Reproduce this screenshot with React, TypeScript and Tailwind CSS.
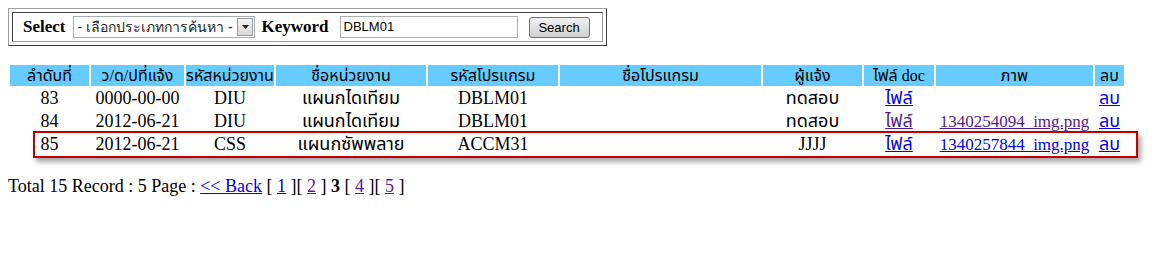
const font = 'font-["Liberation_Serif","Tahoma","Noto_Sans_Thai","Loma","Garuda",serif]';

type Row = {
  no: string;
  date: string;
  dept: string;
  deptName: string;
  prog: string;
  progName: string;
  reporter: string;
  fileVisited: boolean;
  image?: { name: string; visited: boolean };
};

const rows: Row[] = [
  { no: '83', date: '0000-00-00', dept: 'DIU', deptName: 'แผนกไดเทียม', prog: 'DBLM01', progName: '', reporter: 'ทดสอบ', fileVisited: false },
  { no: '84', date: '2012-06-21', dept: 'DIU', deptName: 'แผนกไดเทียม', prog: 'DBLM01', progName: '', reporter: 'ทดสอบ', fileVisited: true, image: { name: '1340254094_img.png', visited: true } },
  { no: '85', date: '2012-06-21', dept: 'CSS', deptName: 'แผนกซัพพลาย', prog: 'ACCM31', progName: '', reporter: 'JJJJ', fileVisited: false, image: { name: '1340257844_img.png', visited: false } },
];

const headers: { label: string; w: string }[] = [
  { label: 'ลำดับที่', w: 'w-[79px]' },
  { label: 'ว/ด/ปที่แจ้ง', w: 'w-[93px]' },
  { label: 'รหัสหน่วยงาน', w: 'w-[88px]' },
  { label: 'ชื่อหน่วยงาน', w: 'w-[150px]' },
  { label: 'รหัสโปรแกรม', w: 'w-[130px]' },
  { label: 'ชื่อโปรแกรม', w: 'w-[201px]' },
  { label: 'ผู้แจ้ง', w: 'w-[99px]' },
  { label: 'ไฟล์ doc', w: 'w-[70px]' },
  { label: 'ภาพ', w: 'w-[157px]' },
  { label: 'ลบ', w: 'w-[29px]' },
];

function Link({ children, visited = false }: { children: React.ReactNode; visited?: boolean }) {
  return (
    <a href="#" className={`underline ${visited ? 'text-[#551a8b]' : 'text-[#0000ee]'}`}>
      {children}
    </a>
  );
}

function SearchBox() {
  return (
    <div className="w-[599px] border border-[#a0a0a0] border-r-[#404040] border-b-[#404040] p-[3px]">
      <div className="flex h-[30px] items-center border border-[#404040] border-r-[#a0a0a0] border-b-[#a0a0a0] pl-[10px]">
        <span className="text-[17px] font-bold">Select</span>
        <div className="ml-[8px] flex h-[22px] w-[182px] items-center border border-[#a5acb2] bg-white">
          <span className='flex-1 whitespace-nowrap pl-[3px] font-["Tahoma","Liberation_Sans",sans-serif] text-[14px] text-[#222]'>
            - เลือกประเภทการค้นหา -
          </span>
          <span className="mr-[1px] flex h-[18px] w-[16px] items-center justify-center border border-[#9a9a9a] bg-gradient-to-b from-[#f4f4f4] to-[#d8d8d8]">
            <svg width="7" height="4" viewBox="0 0 7 4">
              <path d="M0 0h7L3.5 4z" fill="#222" />
            </svg>
          </span>
        </div>
        <span className="ml-[6px] text-[17px] font-bold">Keyword</span>
        <div className='ml-[11px] flex h-[22px] w-[178px] items-center border border-[#abadb3] bg-white pl-[3px] font-["Liberation_Sans",sans-serif] text-[13px]'>
          DBLM01
        </div>
        <button className='ml-[11px] h-[21px] w-[61px] rounded-[3px] border border-[#707070] bg-gradient-to-b from-[#f2f2f2] to-[#cfcfcf] font-["Liberation_Sans",sans-serif] text-[13px] text-black'>
          Search
        </button>
      </div>
    </div>
  );
}

export default function App() {
  return (
    <div className={`relative h-[264px] w-[1160px] bg-white p-[8px] text-[17px] text-black ${font}`}>
      <SearchBox />

      <table className="mt-[17px] w-[1118px] table-fixed border-separate border-spacing-[2px] whitespace-nowrap">
        <thead>
          <tr>
            {headers.map((h) => (
              <th key={h.label} className={`${h.w} h-[21px] overflow-visible bg-[#66ccff] p-0 text-center text-[16px] font-normal leading-[21px]`}>
                {h.label}
              </th>
            ))}
          </tr>
        </thead>
        <tbody className="text-[18px]">
          {rows.map((r) => (
            <tr key={r.no} className="text-center">
              <td className="h-[21px] p-0 leading-[21px]">{r.no}</td>
              <td className="p-0 leading-[21px]">{r.date}</td>
              <td className="p-0 leading-[21px]">{r.dept}</td>
              <td className="p-0 leading-[21px]">{r.deptName}</td>
              <td className="p-0 leading-[21px]">{r.prog}</td>
              <td className="p-0 leading-[21px]">{r.progName}</td>
              <td className="p-0 leading-[21px]">{r.reporter}</td>
              <td className="p-0 leading-[21px]">
                <Link visited={r.fileVisited}>ไฟล์</Link>
              </td>
              <td className="p-0 text-[17px] leading-[21px]">
                {r.image && <Link visited={r.image.visited}>{r.image.name}</Link>}
              </td>
              <td className="p-0 leading-[21px]">
                <Link>ลบ</Link>
              </td>
            </tr>
          ))}
        </tbody>
      </table>

      <p className="mt-[18px] text-[18px] leading-[22px]">
        Total 15 Record : 5 Page : <Link>&lt;&lt; Back</Link> [ <Link>1</Link> ][ <Link visited>2</Link> ]{' '}
        <b>3</b> [ <Link visited>4</Link> ][ <Link visited>5</Link> ]
      </p>

      <div className="absolute left-[33px] top-[131px] h-[27px] w-[1105px] border-2 border-[#c00000] shadow-[3px_4px_5px_rgba(0,0,0,0.35)]" />
    </div>
  );
}
